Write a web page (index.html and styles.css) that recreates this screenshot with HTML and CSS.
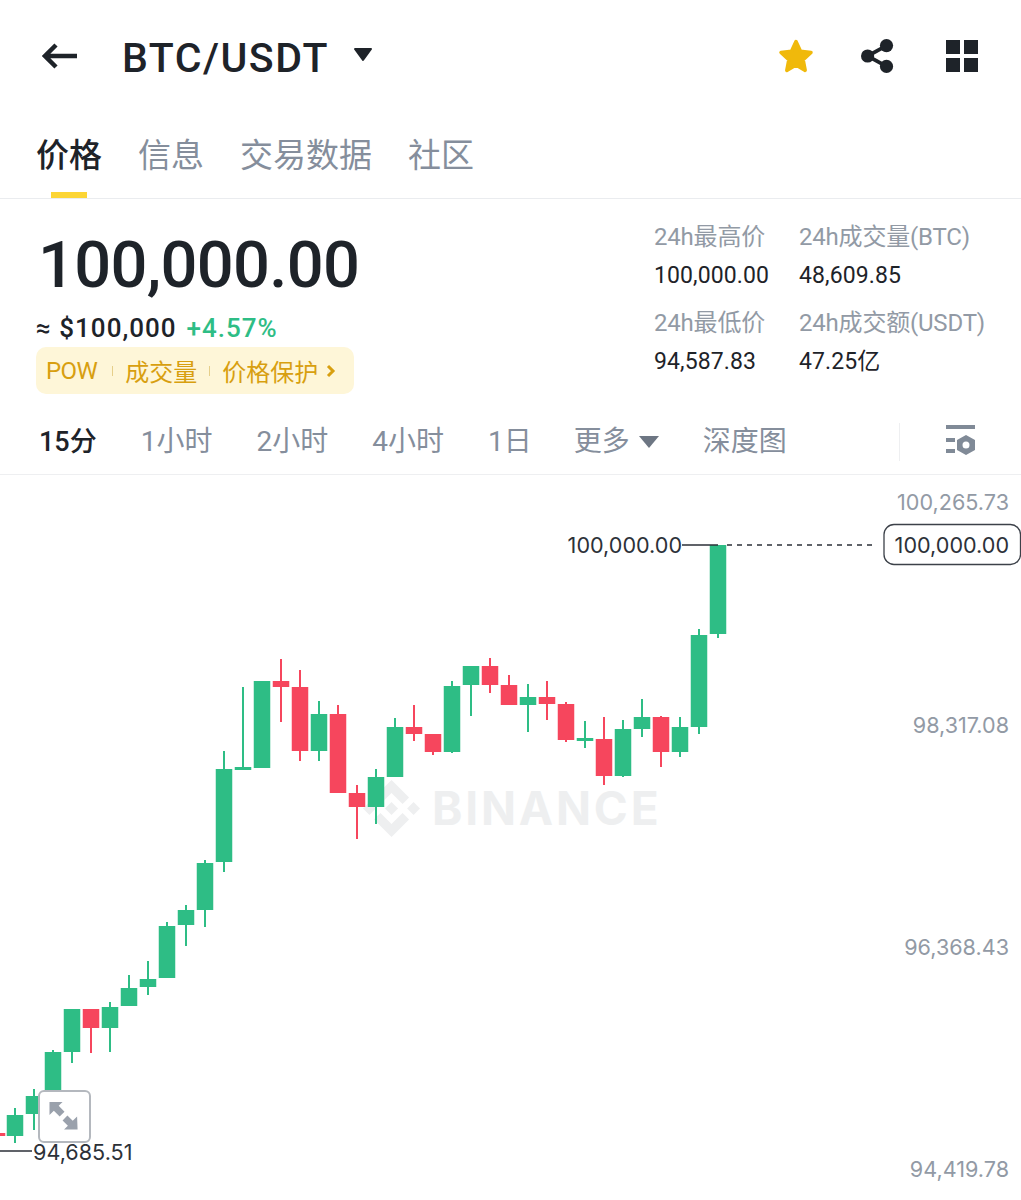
FILE: index.html
```html
<!DOCTYPE html>
<html lang="zh-CN">
<head>
<meta charset="utf-8">
<title>BTC/USDT</title>
<link rel="stylesheet" href="styles.css">
</head>
<body>
<main class="page">
  <header class="topbar">
    <svg class="icon-back" viewBox="0 0 36 26" aria-hidden="true"><path d="M35 13H3M14 2 3 13l11 11"/></svg>
    <h1 class="pair">BTC/USDT</h1>
    <svg class="icon-caret" viewBox="0 0 20 14" aria-hidden="true"><path d="M2 1h16L10 12z"/></svg>
    <div class="actions">
      <svg class="icon-star" viewBox="0 0 36 36" aria-hidden="true"><path d="M18 3.500l4.500 9.700 10.500 1.300-7.800 7.300 2 10.600-9.200-5.300-9.200 5.300 2-10.600L3 14.500l10.500-1.300z"/></svg>
      <svg class="icon-share" viewBox="0 0 36 36" aria-hidden="true"><path class="share-line" d="M27 7 7 18l20 11"/><circle cx="27" cy="7" r="7"/><circle cx="7" cy="18" r="7"/><circle cx="27" cy="29" r="7"/></svg>
      <svg class="icon-grid" viewBox="0 0 32 32" aria-hidden="true"><path d="M0 0h14v14H0zM18 0h14v14H18zM0 18h14v14H0zM18 18h14v14H18z"/></svg>
    </div>
  </header>

  <nav class="tabs">
    <a class="tab tab-active">价格</a>
    <a class="tab">信息</a>
    <a class="tab">交易数据</a>
    <a class="tab">社区</a>
  </nav>

  <section class="summary">
    <div class="price-block">
      <div class="price">100,000.00</div>
      <div class="price-sub"><span>≈ $100,000</span><span class="change">+4.57%</span></div>
      <div class="badge">
        <span class="badge-pow">POW</span><i class="badge-sep"></i><span>成交量</span><i class="badge-sep"></i><span>价格保护</span>
        <svg class="badge-arrow" viewBox="0 0 10 14" aria-hidden="true"><path d="M2 2l5 5-5 5"/></svg>
      </div>
    </div>
    <div class="stats">
      <div class="stat"><span class="stat-label">24h最高价</span><span class="stat-value">100,000.00</span></div>
      <div class="stat"><span class="stat-label">24h成交量(BTC)</span><span class="stat-value">48,609.85</span></div>
      <div class="stat"><span class="stat-label">24h最低价</span><span class="stat-value">94,587.83</span></div>
      <div class="stat"><span class="stat-label">24h成交额(USDT)</span><span class="stat-value">47.25亿</span></div>
    </div>
  </section>

  <nav class="intervals">
    <a class="interval interval-active">15分</a>
    <a class="interval">1小时</a>
    <a class="interval">2小时</a>
    <a class="interval">4小时</a>
    <a class="interval">1日</a>
    <a class="interval interval-more">更多<svg class="icon-more" viewBox="0 0 20 14" aria-hidden="true"><path d="M0 1h20L10 13z"/></svg></a>
    <a class="interval">深度图</a>
    <span class="interval-divider"></span>
    <svg class="icon-settings" viewBox="0 0 30 30" aria-hidden="true">
      <path d="M0 0h29v4H0zM0 13h9v4H0zM0 24h9v4H0z"/>
      <path fill-rule="evenodd" d="M20 10l9 5v10l-9 5-9-5V15zM20 16.500a3.500 3.500 0 1 0 0 7 3.500 3.500 0 0 0 0-7z"/>
    </svg>
  </nav>

  <section class="chart">
    <svg class="chart-svg" viewBox="0 475 1021 725" role="img" aria-label="BTC/USDT K线图">
      <g class="watermark">
        <svg x="363" y="780" width="57" height="57" viewBox="0 0 126.610 126.610">
          <path d="m38.730 53.200 24.590-24.580 24.600 24.600 14.300-14.310-38.900-38.910-38.900 38.900 14.310 14.300z"/>
          <path d="m0 63.310 14.300-14.310 14.310 14.310-14.310 14.300z"/>
          <path d="m38.730 73.410 24.590 24.590 24.600-24.600 14.310 14.290-38.900 38.910-38.910-38.880-.02-.02z"/>
          <path d="m98 63.310 14.300-14.310 14.310 14.300-14.310 14.320z"/>
          <path d="m77.830 63.300-14.510-14.520-14.520 14.510 14.520 14.500z"/>
        </svg>
        <text class="watermark-text" x="432" y="825">BINANCE</text>
      </g>

      <path class="wick-up" d="M718 545V638M699 629V734M680 717V757M642 699V737M623 720V777M585 721V748M528 684V732M471 666V716M452 681V753M395 718V777M376 769V824M319 701V761M262 681V768M243 687V769M224 751V872M205 860V927M186 905V946M167 922V978M148 961V995M129 975V1006M110 1002V1052M72 1009V1063M53 1050V1095M34 1089V1130M15 1108V1143"/>
      <path class="wick-down" d="M661 716V767M604 717V785M566 702V742M547 681V720M509 675V705M490 658V693M433 734V755M414 705V741M357 785V839M338 705V793M300 670V761M281 659V722M91 1009V1053"/>
      <path class="body-up" d="M718 545V634M699 635V727M680 727V752M642 717V729M623 729V776M585 738V741M528 697V705M471 666V685M452 686V752M395 727V777M376 777V807M319 714V751M262 681V768M243 767V770M224 769V862M205 863V910M186 910V925M167 926V978M148 979V987M129 988V1006M110 1007V1028M72 1009V1052M53 1052V1090M34 1096V1114M15 1115V1136"/>
      <path class="body-down" d="M661 717V752M604 739V776M566 704V740M547 697V704M509 685V705M490 666V685M433 734V752M414 727V734M357 793V807M338 714V793M300 687V751M281 681V687M91 1009V1028M-3 1133V1136"/>

      <path class="leader" d="M682 545H718M0 1151H32"/>
      <path class="dashes" d="M727 545H875"/>
      <rect class="last-box" x="884" y="524.500" width="136.500" height="40" rx="10"/>

      <text class="axis" x="1009" y="510">100,265.73</text>
      <text class="axis" x="1009" y="733">98,317.08</text>
      <text class="axis" x="1009" y="955">96,368.43</text>
      <text class="axis" x="1009" y="1177">94,419.78</text>
      <text class="mark" x="1009" y="553">100,000.00</text>
      <text class="mark" x="682" y="553">100,000.00</text>
      <text class="mark" x="132.500" y="1160">94,685.51</text>
    </svg>
    <button class="expand" aria-label="全屏">
      <svg class="icon-expand" viewBox="0 0 32 32" aria-hidden="true">
        <path d="M.5 1H14l-4 4 6 6-5 5-6-6-4.500 4.500zM29.500 29.500H15.500l4-4-5.500-5.500 5-5 5.500 5.500 4.500-4.500z"/>
      </svg>
    </button>
  </section>
</main>
</body>
</html>
```

FILE: styles.css
```css
* { box-sizing: border-box; }

html, body {
  margin: 0;
  padding: 0;
  background: #fff;
}

body {
  font-family: Roboto, "Noto Sans CJK SC", sans-serif;
  color: #1e2329;
}

.page {
  width: 1021px;
  height: 1200px;
  overflow: hidden;
}

/* top bar */
.topbar {
  display: flex;
  align-items: center;
  height: 112px;
  padding: 0 42px;
}

.icon-back {
  width: 36px;
  height: 26px;
  fill: none;
  stroke: #1e2329;
  stroke-width: 4.500px;
}

.pair {
  margin: 4px 0 0 44px;
  font-size: 41px;
  font-weight: 500;
  letter-spacing: 1.500px;
  line-height: 48px;
}

.icon-caret {
  width: 20px;
  height: 14px;
  margin: -3px 0 0 24px;
  fill: #1e2329;
  stroke: #1e2329;
  stroke-width: 2px;
  stroke-linejoin: round;
}

.actions {
  display: flex;
  align-items: center;
  margin-left: auto;
}

.icon-star {
  width: 36px;
  height: 36px;
  fill: #f0b90b;
  stroke: #f0b90b;
  stroke-width: 3.500px;
  stroke-linejoin: round;
}

.icon-share {
  width: 34px;
  height: 36px;
  margin-left: 47px;
  fill: #1e2329;
}

.share-line {
  fill: none;
  stroke: #1e2329;
  stroke-width: 4px;
}

.icon-grid {
  width: 32px;
  height: 32px;
  margin-left: 51px;
  margin-right: 1px;
  fill: #1e2329;
}

/* tabs */
.tabs {
  display: flex;
  gap: 36px;
  height: 87px;
  padding: 0 36px;
  border-bottom: 1px solid #eaecef;
}

.tab {
  position: relative;
  font-size: 33px;
  line-height: 88px;
  color: #858e9c;
}

.tab-active {
  color: #1e2329;
  font-weight: 500;
}

.tab-active::after {
  content: "";
  position: absolute;
  left: 15px;
  bottom: 0;
  width: 36px;
  height: 6px;
  background: #fcd535;
}

/* summary */
.summary {
  display: flex;
  justify-content: space-between;
  height: 216px;
  padding: 0 36px;
}

.price {
  margin: 32px 0 0 2px;
  font-size: 65px;
  font-weight: 500;
  letter-spacing: -.7px;
  line-height: 68px;
}

.price-sub {
  display: flex;
  gap: 10px;
  margin-top: 11px;
  font-size: 26px;
  font-weight: 500;
  letter-spacing: 1px;
  line-height: 36px;
}

.change {
  color: #2ebd85;
}

.badge {
  display: flex;
  align-items: center;
  width: 318px;
  height: 47px;
  margin-top: 1px;
  padding-left: 10px;
  border-radius: 10px;
  background: #fef6d8;
  color: #d89f10;
  font-size: 24px;
}

.badge-pow {
  margin-right: 3px;
  letter-spacing: -.6px;
}

.badge-sep {
  width: 1px;
  height: 10px;
  margin: 0 12px;
  background: #e6cf8a;
}

.badge-arrow {
  width: 10px;
  height: 14px;
  margin-left: 8px;
  fill: none;
  stroke: #d89f10;
  stroke-width: 3px;
}

.stats {
  display: grid;
  grid-template-columns: 145px auto;
  grid-auto-rows: 86px;
  width: 331px;
  margin-top: 22px;
}

.stat {
  display: flex;
  flex-direction: column;
  gap: 7px;
}

.stat-label {
  font-size: 24px;
  line-height: 32px;
  letter-spacing: -.2px;
  color: #929aa5;
  white-space: nowrap;
}

.stat-value {
  font-size: 23px;
  line-height: 32px;
  letter-spacing: .1px;
  white-space: nowrap;
}

/* interval row */
.intervals {
  display: flex;
  align-items: center;
  gap: 44px;
  height: 60px;
  padding: 0 39px 5px;
  border-bottom: 1px solid #eeeff1;
}

.interval {
  font-size: 28px;
  line-height: 50px;
  color: #858e9c;
  white-space: nowrap;
}

.interval-active {
  color: #1e2329;
  font-size: 27px;
  font-weight: 500;
}

.interval-more {
  display: flex;
  align-items: center;
  margin-left: -2px;
}

.icon-more {
  width: 20px;
  height: 14px;
  margin-left: 9px;
  fill: #6d7683;
}

.interval-divider {
  width: 1px;
  height: 38px;
  margin-left: 68px;
  background: #eeeff1;
}

.icon-settings {
  width: 30px;
  height: 30px;
  flex: none;
  margin: 0 0 5px 2px;
  fill: #808a97;
}

/* chart */
.chart {
  position: relative;
  height: 725px;
}

.chart-svg {
  display: block;
  width: 1021px;
  height: 725px;
}

.watermark {
  fill: #eeeff0;
}

.watermark-text {
  font-family: Inter, sans-serif;
  font-size: 46px;
  font-weight: 700;
  letter-spacing: 2.800px;
}

.wick-up { fill: none; stroke: #2ebd85; stroke-width: 2px; }
.wick-down { fill: none; stroke: #f6465d; stroke-width: 2px; }
.body-up { fill: none; stroke: #2ebd85; stroke-width: 16.500px; }
.body-down { fill: none; stroke: #f6465d; stroke-width: 16.500px; }

.leader {
  fill: none;
  stroke: #2c3138;
  stroke-width: 1.300px;
}

.dashes {
  fill: none;
  stroke: #2c3138;
  stroke-width: 1.500px;
  stroke-dasharray: 5 5;
}

.last-box {
  fill: #fff;
  stroke: #3c4149;
  stroke-width: 1.300px;
}

.axis, .mark {
  font-family: Inter, sans-serif;
  font-size: 21.600px;
  text-anchor: end;
}

.axis { fill: #929aa5; }
.mark { fill: #2c3138; }

.expand {
  position: absolute;
  left: 38px;
  top: 615px;
  display: flex;
  align-items: center;
  justify-content: center;
  width: 53px;
  height: 53px;
  padding: 0;
  border: 2px solid #b4b8be;
  border-radius: 6px;
  background: #fff;
}

.icon-expand {
  width: 31px;
  height: 31px;
  fill: #9aa1ac;
}
```
